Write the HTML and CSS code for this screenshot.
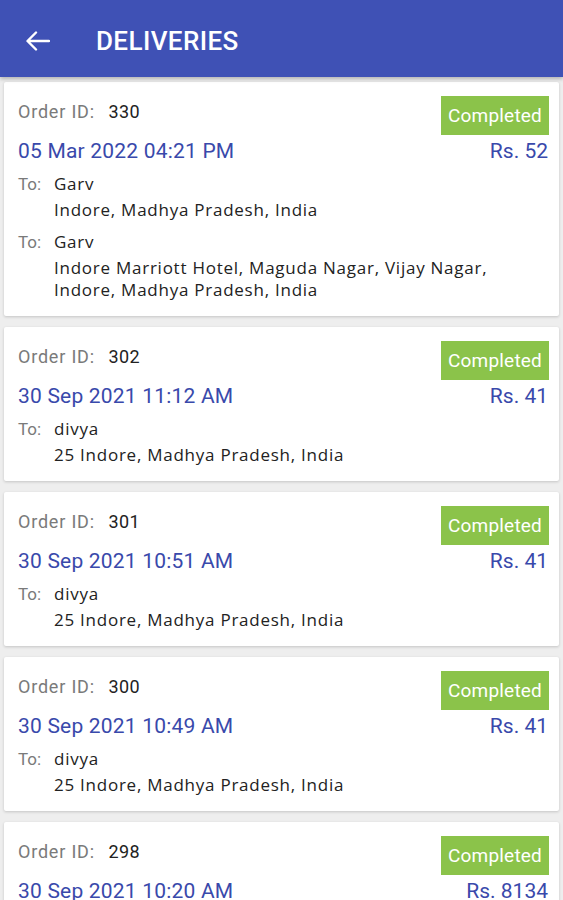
FILE: index.html
```html
<!DOCTYPE html>
<html lang="en">
<head>
    <meta charset="UTF-8">
    <meta name="viewport" content="width=device-width, initial-scale=1.0">
    <title>Deliveries</title>
    <link rel="stylesheet" href="styles.css">
</head>
<body>
    <div class="app-bar">
        <svg class="back" width="24" height="20" viewBox="0 0 24 20">
            <path d="M23 10H2M10 1.5L1.5 10l8.5 8.5" fill="none" stroke="#fff" stroke-width="2.4" stroke-linecap="round" stroke-linejoin="round"/>
        </svg>
        <h1>DELIVERIES</h1>
    </div>

    <div class="list">
        <!-- Order 330 -->
        <div class="card">
            <div class="row top">
                <p class="order"><span class="label">Order ID:</span> 330</p>
                <span class="badge">Completed</span>
            </div>
            <div class="row">
                <p class="date">05 Mar 2022 04:21 PM</p>
                <p class="price">Rs. 52</p>
            </div>
            <div class="dest">
                <span class="label">To:</span>
                <div>
                    <p class="name">Garv</p>
                    <p class="addr">Indore, Madhya Pradesh, India</p>
                </div>
            </div>
            <div class="dest">
                <span class="label">To:</span>
                <div>
                    <p class="name">Garv</p>
                    <p class="addr">Indore Marriott Hotel, Maguda Nagar, Vijay Nagar, Indore, Madhya Pradesh, India</p>
                </div>
            </div>
        </div>

        <!-- Order 302 -->
        <div class="card">
            <div class="row top">
                <p class="order"><span class="label">Order ID:</span> 302</p>
                <span class="badge">Completed</span>
            </div>
            <div class="row">
                <p class="date">30 Sep 2021 11:12 AM</p>
                <p class="price">Rs. 41</p>
            </div>
            <div class="dest">
                <span class="label">To:</span>
                <div>
                    <p class="name">divya</p>
                    <p class="addr">25 Indore, Madhya Pradesh, India</p>
                </div>
            </div>
        </div>

        <!-- Order 301 -->
        <div class="card">
            <div class="row top">
                <p class="order"><span class="label">Order ID:</span> 301</p>
                <span class="badge">Completed</span>
            </div>
            <div class="row">
                <p class="date">30 Sep 2021 10:51 AM</p>
                <p class="price">Rs. 41</p>
            </div>
            <div class="dest">
                <span class="label">To:</span>
                <div>
                    <p class="name">divya</p>
                    <p class="addr">25 Indore, Madhya Pradesh, India</p>
                </div>
            </div>
        </div>

        <!-- Order 300 -->
        <div class="card">
            <div class="row top">
                <p class="order"><span class="label">Order ID:</span> 300</p>
                <span class="badge">Completed</span>
            </div>
            <div class="row">
                <p class="date">30 Sep 2021 10:49 AM</p>
                <p class="price">Rs. 41</p>
            </div>
            <div class="dest">
                <span class="label">To:</span>
                <div>
                    <p class="name">divya</p>
                    <p class="addr">25 Indore, Madhya Pradesh, India</p>
                </div>
            </div>
        </div>

        <!-- Order 298 -->
        <div class="card">
            <div class="row top">
                <p class="order"><span class="label">Order ID:</span> 298</p>
                <span class="badge">Completed</span>
            </div>
            <div class="row">
                <p class="date">30 Sep 2021 10:20 AM</p>
                <p class="price">Rs. 8134</p>
            </div>
            <div class="dest">
                <span class="label">To:</span>
                <div>
                    <p class="name">divya</p>
                    <p class="addr">25 Indore, Madhya Pradesh, India</p>
                </div>
            </div>
        </div>
    </div>
</body>
</html>
```

FILE: styles.css
```css
/* Basic Reset */
body, h1, p {
    margin: 0;
    padding: 0;
}

body {
    background: #eeeeee;
    font-family: 'Roboto', sans-serif;
    color: #222;
    height: 900px;
    overflow: hidden;
}

.app-bar {
    height: 77px;
    box-sizing: border-box;
    padding: 5px 0 0 26px;
    background: #3f51b5;
    display: flex;
    align-items: center;
    box-shadow: 0 2px 4px rgba(0, 0, 0, 0.25);
    position: relative;
}

.app-bar .back {
    width: 24px;
    height: 20px;
}

.app-bar h1 {
    color: #fff;
    font-size: 26px;
    font-weight: 500;
    margin-left: 46px;
    letter-spacing: 0.4px;
}

.list {
    padding: 5px 4px;
    display: flex;
    flex-direction: column;
    gap: 11px;
}

.card {
    background: #fff;
    border-radius: 2px;
    box-shadow: 0 1px 3px rgba(0, 0, 0, 0.18);
    padding: 14px 10px 15px 14px;
}

.row {
    display: flex;
    justify-content: space-between;
    align-items: center;
}

.row.top {
    height: 39px;
}

.order {
    font-size: 18px;
    color: #222;
    padding-bottom: 9px;
    letter-spacing: 0.3px;
}

.order .label {
    font-size: 18px;
    letter-spacing: 0.8px;
    margin-right: 9px;
}

.label {
    color: #7a7a7a;
    font-size: 17px;
}

.badge {
    background: #8bc34a;
    color: #fff;
    font-size: 19px;
    height: 39px;
    line-height: 39px;
    padding: 0 7px 0 7px;
    letter-spacing: 0.2px;
}

.date, .price {
    font-size: 21px;
    color: #3949ab;
    line-height: 26px;
    margin-top: 3px;
}

.date {
    letter-spacing: 0.2px;
}

.price {
    margin-right: 1px;
}

.dest {
    display: flex;
    margin-top: 9px;
    font-family: 'Open Sans', sans-serif;
}

.dest + .dest {
    margin-top: 10px;
}

.dest .label {
    width: 36px;
    flex-shrink: 0;
    font-family: 'Roboto', sans-serif;
    line-height: 22px;
}

.name, .addr {
    font-size: 17px;
    letter-spacing: 0.75px;
    line-height: 22px;
    color: #222;
}

.name {
    margin-bottom: 4px;
}

.addr {
    max-width: 475px;
}
```
